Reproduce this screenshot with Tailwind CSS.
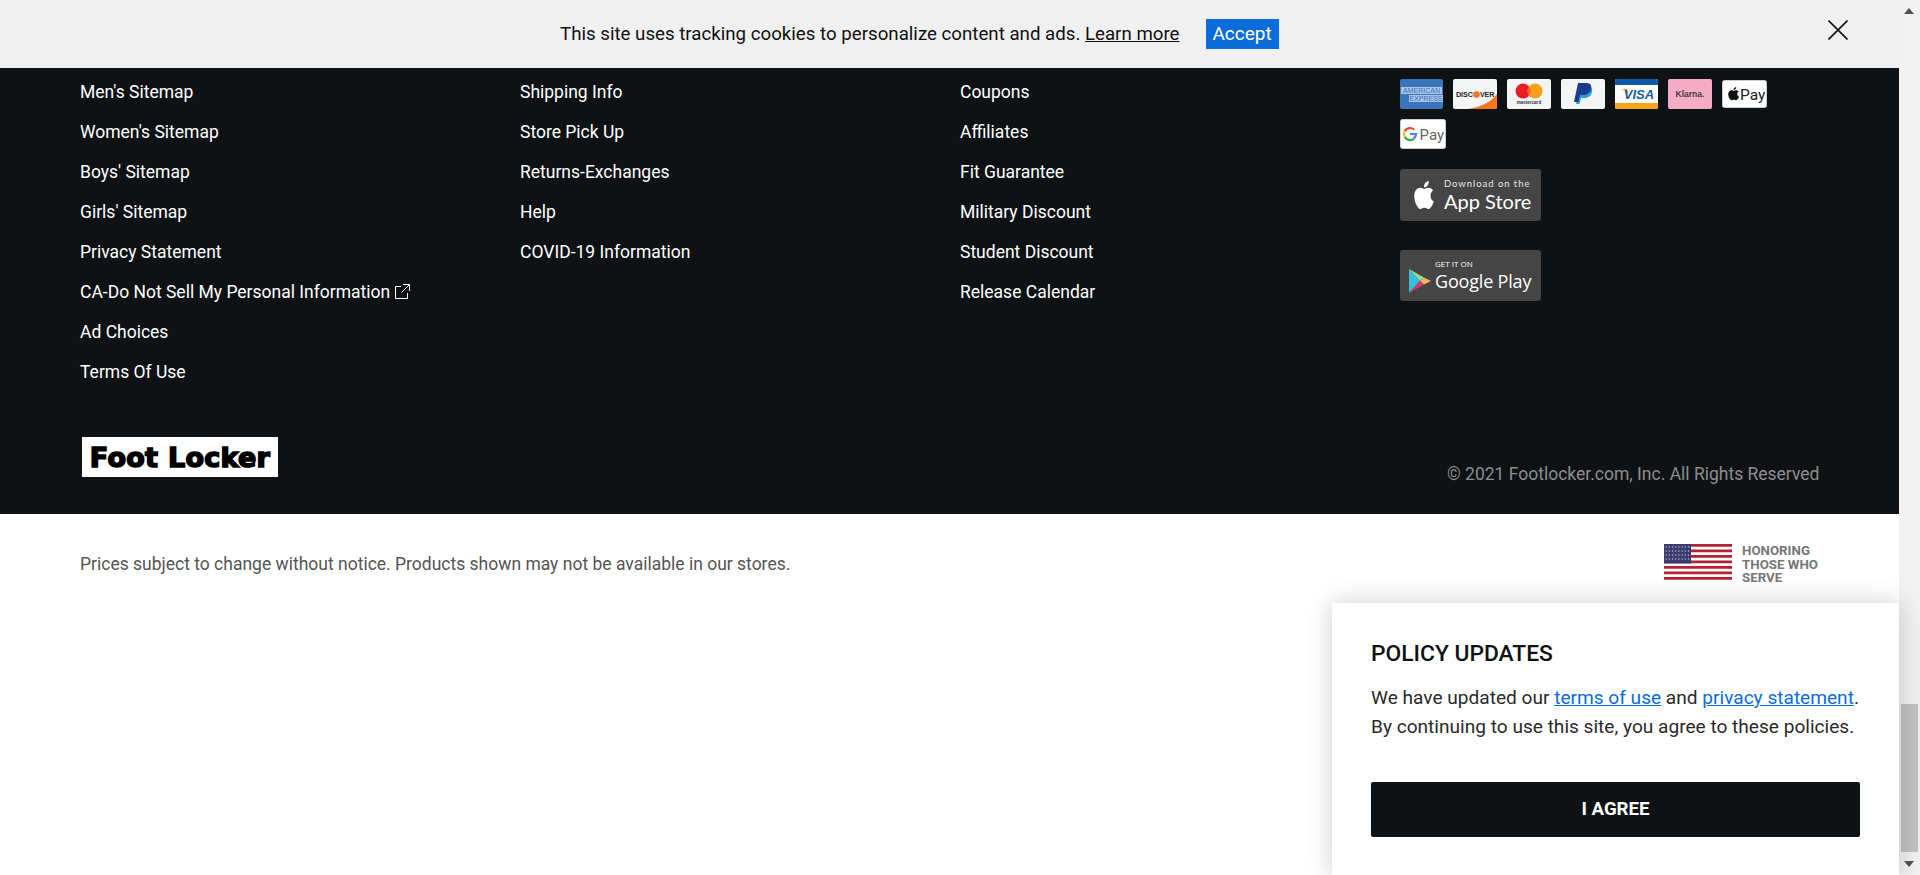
<!DOCTYPE html>
<html lang="en">
<head>
    <meta charset="UTF-8">
    <title>Foot Locker - Footer</title>
    <script src="https://cdn.jsdelivr.net/npm/@tailwindcss/browser@4"></script>
</head>
<body class="bg-white font-['Roboto',sans-serif]">
<div class="relative flex h-[875px] w-[1920px] overflow-hidden">

    <!-- Page -->
    <div class="w-[1899px] shrink-0">
        <!-- Cookie bar -->
        <div class="relative flex h-[68px] items-center bg-[#f0f0f0] pl-[560px]">
            <p class="text-[18.7px] text-[#111]">This site uses tracking cookies to personalize content and ads. <a class="underline">Learn more</a></p>
            <button class="ml-[26px] h-[30px] w-[73px] bg-[#0b6cdc] text-[19px] text-white">Accept</button>
            <svg class="absolute left-[1828px] top-[20px] h-5 w-5" viewBox="0 0 20 20" fill="none" stroke="#111" stroke-width="1.6"><path d="M0.5 0.5L19.5 19.5M19.5 0.5L0.5 19.5"/></svg>
        </div>

        <!-- Footer -->
        <div class="h-[446px] bg-[#0e1214] pl-[80px] pt-[4px]">
            <div class="flex h-[355px]">
                <ul class="w-[440px] text-[17.5px] leading-[40px] text-white">
                    <li>Men's Sitemap</li>
                    <li>Women's Sitemap</li>
                    <li>Boys' Sitemap</li>
                    <li>Girls' Sitemap</li>
                    <li>Privacy Statement</li>
                    <li class="flex items-center">CA-Do Not Sell My Personal Information
                        <svg class="relative -top-[1px] ml-[5px] h-[15px] w-[15px]" viewBox="0 0 15 15" fill="none" stroke="#fff" stroke-width="1"><path d="M6 2.500H0.500V14.500H12.500V9M8 0.500H14.500V7M14.500 0.500L6.500 8.500"/></svg>
                    </li>
                    <li>Ad Choices</li>
                    <li>Terms Of Use</li>
                </ul>
                <ul class="w-[440px] text-[17.5px] leading-[40px] text-white">
                    <li>Shipping Info</li>
                    <li>Store Pick Up</li>
                    <li>Returns-Exchanges</li>
                    <li>Help</li>
                    <li>COVID-19 Information</li>
                </ul>
                <ul class="w-[440px] text-[17.5px] leading-[40px] text-white">
                    <li>Coupons</li>
                    <li>Affiliates</li>
                    <li>Fit Guarantee</li>
                    <li>Military Discount</li>
                    <li>Student Discount</li>
                    <li>Release Calendar</li>
                </ul>
                <div class="w-[400px] pt-[7px]">
                    <!-- Payment icons -->
                    <div class="flex w-[380px] flex-wrap items-center gap-x-[10px] gap-y-[10px]">
                        <svg class="h-[30px] w-[43px]" viewBox="0 0 43 30"><rect width="43" height="30" rx="2" fill="#3a74bb"/><rect x="1" y="8" width="41" height="7" fill="#a9c4e6"/><rect x="9" y="16" width="34" height="7" fill="#a9c4e6"/><text x="21.5" y="14" text-anchor="middle" font-family="Liberation Sans" font-size="7" fill="#3a74bb">AMERICAN</text><text x="26" y="22" text-anchor="middle" font-family="Liberation Sans" font-size="7" fill="#3a74bb">EXPRESS</text></svg>
                        <svg class="h-[30px] w-[44px]" viewBox="0 0 44 30"><rect width="44" height="30" rx="2" fill="#f4f5f5"/><path d="M15 30C28 28 38 23 44 15V28a2 2 0 0 1-2 2Z" fill="#f5761f"/><text x="3" y="18" font-family="Liberation Sans" font-weight="700" font-size="7.2" letter-spacing="-.1" fill="#222">DISC</text><circle cx="23.5" cy="15.500" r="3.300" fill="#f5761f"/><text x="27" y="18" font-family="Liberation Sans" font-weight="700" font-size="7.2" letter-spacing="-.2" fill="#222">VER</text></svg>
                        <svg class="h-[30px] w-[44px]" viewBox="0 0 44 30"><rect width="44" height="30" rx="2" fill="#f4f5f5"/><circle cx="16" cy="12" r="7.500" fill="#eb1c26"/><circle cx="28" cy="12" r="7.500" fill="#f99f1b"/><path d="M22 7.500a7.500 7.500 0 0 1 0 9a7.500 7.500 0 0 1 0-9Z" fill="#f26122"/><text x="22" y="25" text-anchor="middle" font-family="Liberation Sans" font-weight="700" font-size="4.500" fill="#333">mastercard</text></svg>
                        <svg class="h-[30px] w-[44px]" viewBox="0 0 44 30"><rect width="44" height="30" rx="2" fill="#f4f5f5"/><path d="M19 7h7c4 0 6 2 5 6s-4 6-8 6h-3l-1.500 6H15Z" fill="#27a0dc"/><path d="M17 4h8c4 0 6 2 5 6s-4 6-8 6h-3l-1.500 7h-4.500Z" fill="#1c3b8e"/></svg>
                        <svg class="h-[30px] w-[43px]" viewBox="0 0 43 30"><rect width="43" height="30" rx="2" fill="#fff"/><path d="M0 2a2 2 0 0 1 2-2h39a2 2 0 0 1 2 2v4H0Z" fill="#0a5aa5"/><path d="M0 24h43v4a2 2 0 0 1-2 2H2a2 2 0 0 1-2-2Z" fill="#f9a51a"/><path d="M7 10h5l2 5Z" fill="#f9a51a"/><text x="24" y="20" text-anchor="middle" font-family="Liberation Sans" font-weight="700" font-style="italic" font-size="13" fill="#1a5c9e">VISA</text></svg>
                        <svg class="h-[30px] w-[44px]" viewBox="0 0 44 30"><rect width="44" height="30" rx="2" fill="#f5adc6"/><text x="22" y="18" text-anchor="middle" font-family="Liberation Sans" font-weight="700" font-size="8.500" fill="#453a42">Klarna.</text></svg>
                        <svg class="h-[28px] w-[45px]" viewBox="0 0 45 28"><rect x=".5" y=".5" width="44" height="27" rx="2" fill="#fff" stroke="#ccc"/><g transform="translate(5 7) scale(.55)"><path fill="#111" d="M12.152 6.896c-.948 0-2.415-1.078-3.96-1.04-2.04.027-3.91 1.183-4.961 3.014-2.117 3.675-.546 9.103 1.519 12.09 1.013 1.454 2.208 3.09 3.792 3.039 1.52-.065 2.09-.987 3.935-.987 1.831 0 2.35.987 3.96.948 1.637-.026 2.676-1.48 3.676-2.948 1.156-1.688 1.636-3.325 1.662-3.415-.039-.013-3.182-1.221-3.22-4.857-.026-3.04 2.48-4.494 2.597-4.559-1.429-2.09-3.623-2.324-4.39-2.376-2-.156-3.675 1.09-4.61 1.09zM15.53 3.83c.843-1.012 1.4-2.427 1.245-3.83-1.207.052-2.662.805-3.532 1.818-.78.896-1.454 2.338-1.273 3.714 1.338.104 2.715-.688 3.559-1.701"/></g><text x="18" y="19.500" font-family="Roboto" font-size="15.500" fill="#222">Pay</text></svg>
                        <svg class="h-[30px] w-[46px]" viewBox="0 0 46 30"><rect x=".5" y=".5" width="45" height="29" rx="2" fill="#fff" stroke="#ccc"/><path d="M10 9a6 6 0 0 0-5.300 3.200" fill="none" stroke="#ea4335" stroke-width="2.200"/><path d="M10 9a6 6 0 0 1 4.200 1.700" fill="none" stroke="#ea4335" stroke-width="2.200"/><path d="M4.700 12.200a6 6 0 0 0 0 5.600" fill="none" stroke="#fbbc05" stroke-width="2.200"/><path d="M4.700 17.800a6 6 0 0 0 9 2" fill="none" stroke="#34a853" stroke-width="2.200"/><path d="M13.700 19.800a6 6 0 0 0 2.300-4.800h-6" fill="none" stroke="#4285f4" stroke-width="2.200"/><text x="19.500" y="20.500" font-family="Roboto" font-size="15" fill="#666">Pay</text></svg>
                    </div>

                    <!-- App badges -->
                    <div class="mt-[20px] flex h-[52px] w-[141px] items-center rounded-[3px] bg-[#454545] pl-[12px] text-white">
                        <svg class="h-[28px] w-[24px]" viewBox="0 0 24 24" preserveAspectRatio="none"><path fill="#fff" d="M12.152 6.896c-.948 0-2.415-1.078-3.96-1.04-2.04.027-3.91 1.183-4.961 3.014-2.117 3.675-.546 9.103 1.519 12.09 1.013 1.454 2.208 3.09 3.792 3.039 1.52-.065 2.09-.987 3.935-.987 1.831 0 2.35.987 3.96.948 1.637-.026 2.676-1.48 3.676-2.948 1.156-1.688 1.636-3.325 1.662-3.415-.039-.013-3.182-1.221-3.22-4.857-.026-3.04 2.48-4.494 2.597-4.559-1.429-2.09-3.623-2.324-4.39-2.376-2-.156-3.675 1.09-4.61 1.09zM15.530 3.830c.843-1.012 1.400-2.427 1.245-3.830-1.207.052-2.662.805-3.532 1.818-.780.896-1.454 2.338-1.273 3.714 1.338.104 2.715-.688 3.559-1.701"/></svg>
                        <div class="ml-[8px] font-['Lato',sans-serif]">
                            <div class="text-[9.5px] leading-[11px] tracking-[.1em] text-[#e6e6e6]">Download on the</div>
                            <div class="text-[20px] leading-[24px]">App Store</div>
                        </div>
                    </div>
                    <div class="mt-[29px] flex h-[51px] w-[141px] items-center rounded-[3px] bg-[#454545] pl-[9px] text-white">
                        <svg class="mt-[11px] h-[24px] w-[22px]" viewBox="0 0 22 24"><path d="M0 0L11 12L0 24Z" fill="#38bfd8"/><path d="M0 0L15 8.500L11 12Z" fill="#9ad79a"/><path d="M0 24L15 15.500L11 12Z" fill="#d43a66"/><path d="M15 8.500L22 12L15 15.500L11 12Z" fill="#f3b25f"/></svg>
                        <div class="ml-[4px] font-['Open_Sans',sans-serif]">
                            <div class="text-[8px] leading-[10px]">GET IT ON</div>
                            <div class="text-[18px] leading-[24px] tracking-[-.01em]">Google Play</div>
                        </div>
                    </div>
                </div>
            </div>
            <div class="flex items-center pl-[2px]">
                <div class="flex h-10 w-[196px] items-center justify-center bg-white font-['DejaVu_Sans',sans-serif] text-[27px] font-bold leading-none tracking-[.01em] text-black [-webkit-text-stroke:1.6px_#000]">Foot Locker</div>
                <p class="ml-[1169px] mt-[34px] text-[17.5px] text-[#8d8d8d]">© 2021 Footlocker.com, Inc. All Rights Reserved</p>
            </div>
        </div>

        <!-- Disclaimer -->
        <div class="flex h-[100px] pl-[80px] pt-[30px]">
            <p class="w-[1584px] text-[17.5px] leading-[40px] text-[#555]">Prices subject to change without notice. Products shown may not be available in our stores.</p>
            <svg class="h-[36px] w-[68px]" viewBox="0 0 68 36">
                <rect width="68" height="36" fill="#fff"/>
                <path d="M0 1.400H68M0 6.900H68M0 12.400H68M0 17.900H68M0 23.400H68M0 28.900H68M0 34.400H68" stroke="#b22234" stroke-width="2.800"/>
                <rect width="27" height="19.500" fill="#3c3b6e"/>
                <path d="M1.500 3H26M1.500 7H26M1.500 11H26M1.500 15H26" stroke="#d9dcec" stroke-width="1.200" stroke-dasharray="1.200 2"/>
            </svg>
            <p class="ml-[10px] text-[13.3px] font-bold leading-[13.5px] text-[#777]">HONORING<br>THOSE WHO<br>SERVE</p>
        </div>
    </div>

    <!-- Scrollbar -->
    <div class="relative w-[21px] shrink-0 bg-[#f1f1f1]">
        <div class="absolute left-[5px] top-[8px] h-0 w-0 border-x-[5px] border-b-[6px] border-x-transparent border-b-[#505050]"></div>
        <div class="absolute left-[2px] top-[704px] h-[148px] w-[17px] bg-[#c1c1c1]"></div>
        <div class="absolute left-[5px] top-[861px] h-0 w-0 border-x-[5px] border-t-[6px] border-x-transparent border-t-[#505050]"></div>
    </div>

    <!-- Policy updates card -->
    <div class="absolute left-[1332px] top-[603px] h-[272px] w-[567px] bg-white pl-[39px] pt-[37px] shadow-[0_0_24px_rgba(0,0,0,.2)]">
        <h2 class="text-[22.8px] font-medium leading-[28px] text-[#0e1214]">POLICY UPDATES</h2>
        <p class="mt-[15px] text-[19.1px] leading-[29px] text-[#2a2a2a]">We have updated our <a class="text-[#0b6cdc] underline">terms of use</a> and <a class="text-[#0b6cdc] underline">privacy statement</a>.<br>By continuing to use this site, you agree to these policies.</p>
        <button class="mt-[41px] h-[55px] w-[489px] rounded-[2px] bg-[#0e1214] text-[18.7px] font-bold text-white">I AGREE</button>
    </div>
</div>
</body>
</html>
